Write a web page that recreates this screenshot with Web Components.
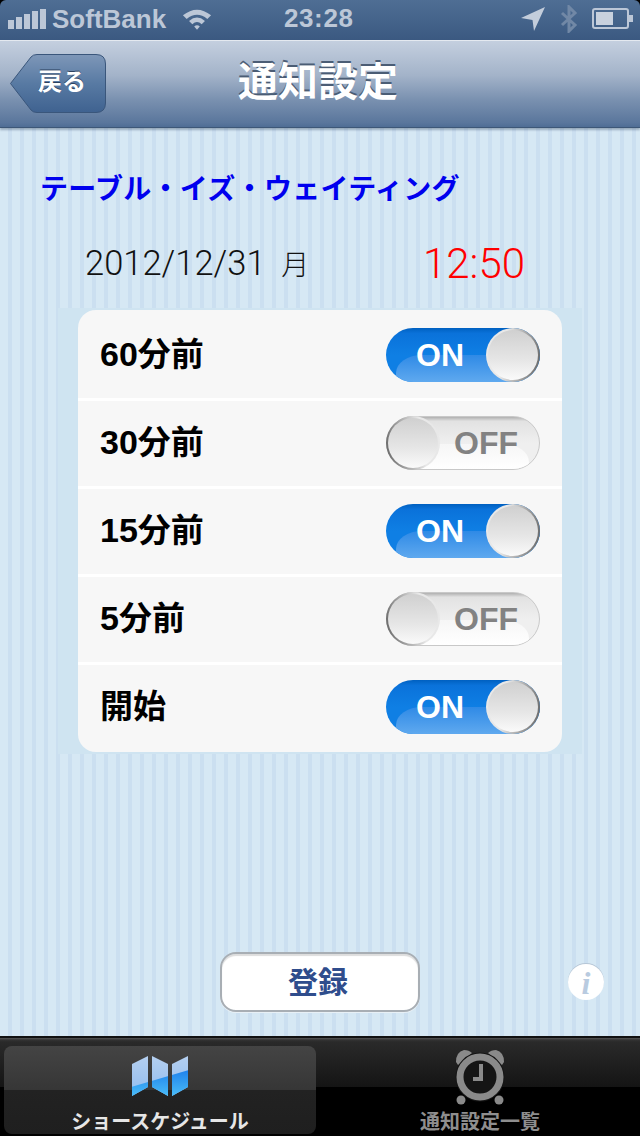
<!DOCTYPE html>
<html lang="ja">
<head>
<meta charset="utf-8">
<title>通知設定</title>
<style>
  html, body { margin: 0; padding: 0; background: #000; }
  body { font-family: "Liberation Sans", "Noto Sans CJK JP", sans-serif; }
</style>
</head>
<body>
<notify-app></notify-app>

<script>
const FONT = '"Liberation Sans", "Noto Sans CJK JP", sans-serif';

class StatusBar extends HTMLElement {
  constructor() {
    super();
    this.attachShadow({ mode: 'open' });
    this.shadowRoot.innerHTML = `
      <style>
        :host {
          display: flex; align-items: center; position: relative; box-sizing: border-box;
          height: 41px; padding: 0 0 2px 8px; flex: none;
          background: linear-gradient(#4f6e94, #3b5981);
          border-radius: 6px 6px 0 0;
          border-bottom: 1px solid #e4e9f0;
          color: #bcc7d7; font: bold 26px ${FONT};
        }
        svg { display: block; flex: none; }
        .carrier { margin-left: 6px; }
        .wifi { margin-left: 16px; }
        .time { position: absolute; left: 284px; top: 2px; line-height: 32px; letter-spacing: .6px; }
        .right { margin-left: auto; display: flex; align-items: center; }
      </style>
      <svg width="38" height="21" viewBox="0 0 38 21" fill="#bcc7d7">
        <rect x="0" y="11" width="6" height="9"/><rect x="8" y="8" width="6" height="12"/>
        <rect x="16" y="5" width="6" height="15"/><rect x="24" y="2" width="6" height="18"/>
        <rect x="32" y="0" width="6" height="20"/>
      </svg>
      <span class="carrier">SoftBank</span>
      <svg class="wifi" width="30" height="24" viewBox="0 0 32 24">
        <path d="M1 8 Q16 -4 31 8 L27 12 Q16 3 5 12 Z" fill="#bcc7d7"/>
        <path d="M7.500 14 Q16 7 24.500 14 L21 17.500 Q16 13 11 17.500 Z" fill="#bcc7d7"/>
        <path d="M13 20 Q16 17.500 19 20 L16 23.500 Z" fill="#bcc7d7"/>
      </svg>
      <span class="time">23:28</span>
      <div class="right">
        <svg width="24" height="24" viewBox="0 0 24 24"><path d="M0 11 L24 0 L13 24 L11.500 13 Z" fill="#c3cddb"/></svg>
        <svg style="margin-left:15px" width="18" height="28" viewBox="0 0 18 28" fill="none">
          <path d="M2 8 L15 20 L9 26 L9 2 L15 8 L2 20" stroke="#7188a6" stroke-width="3"/>
        </svg>
        <svg style="margin:0 6px 0 14px" width="42" height="22" viewBox="0 0 42 22">
          <rect x="1" y="1" width="35" height="19" rx="2" fill="none" stroke="#bcc7d7" stroke-width="2"/>
          <rect x="4" y="4" width="17" height="13" fill="#c8d1de"/>
          <path d="M37 7 H41 V14 H37 Z" fill="#bcc7d7"/>
        </svg>
      </div>
    `;
  }
}

class NavBar extends HTMLElement {
  constructor() {
    super();
    this.attachShadow({ mode: 'open' });
    this.shadowRoot.innerHTML = `
      <style>
        :host {
          display: flex; align-items: center; justify-content: center; position: relative;
          box-sizing: border-box; height: 87px; flex: none;
          background: linear-gradient(#c4cfdf, #a3b3c9 40%, #7a91b0 68%, #5a769c 95%, #4f6d95);
          border-bottom: 1px solid #3d5777;
          box-shadow: 0 2px 2px rgba(40, 60, 90, .35);
        }
        .title { color: #fff; font: bold 40px ${FONT}; margin: 0 4px 10px 0; text-shadow: 0 -2px 0 #4b5d75; }
        .back { position: absolute; left: 10px; top: 13px; width: 96px; height: 59px; }
        .back svg { position: absolute; inset: 0; }
        .back span {
          position: absolute; left: 28px; top: 13px; color: #fff;
          font: bold 24px/30px ${FONT}; text-shadow: 0 -1px 0 #2c415f;
        }
      </style>
      <div class="back">
        <svg width="96" height="59" viewBox="0 0 96 59">
          <defs><linearGradient id="bk" x1="0" y1="0" x2="0" y2="1">
            <stop offset="0" stop-color="#7e97b8"/><stop offset=".5" stop-color="#587aa3"/><stop offset="1" stop-color="#3f6290"/>
          </linearGradient></defs>
          <path d="M.5 29.500 L21 3 Q23 .5 27 .5 H86 Q95.500 .5 95.500 10 V49 Q95.500 58.500 86 58.500 H27 Q23 58.500 21 56 Z" fill="url(#bk)" stroke="#3a567b"/>
        </svg>
        <span>戻る</span>
      </div>
      <span class="title">通知設定</span>
    `;
  }
}

class ToggleSwitch extends HTMLElement {
  constructor() {
    super();
    this.attachShadow({ mode: 'open' });
    const on = this.hasAttribute('on');
    this.shadowRoot.innerHTML = `
      <style>
        :host { display: block; position: relative; width: 154px; height: 54px; flex: none; }
        .track {
          position: absolute; inset: 0; border-radius: 27px; overflow: hidden; box-sizing: border-box;
          display: flex; align-items: center; font: bold 32px ${FONT};
        }
        .track.on {
          background: linear-gradient(#0060c0, #0a72da 10%, #0f7fe4 50%);
          color: #fff; padding-left: 30px;
        }
        .track.off {
          background: linear-gradient(#b0b0b0, #e2e2e2 8%, #efefef 50%);
          border: 1px solid #c8c8c8; color: #828282; padding-left: 67px;
        }
        .gloss { position: absolute; top: 27px; bottom: 0; }
        .on .gloss {
          left: 10px; right: 0; border-top-left-radius: 26px 18px;
          background: linear-gradient(#2f8ae6, #5fa9ef);
        }
        .off .gloss {
          left: 0; right: 10px; border-top-right-radius: 26px 18px;
          background: linear-gradient(#f6f6f6, #fff);
        }
        .track span { position: relative; }
        .knob {
          position: absolute; top: 0; width: 54px; height: 54px; box-sizing: border-box; padding: 2px;
          border-radius: 50%;
          background: linear-gradient(${on ? '100deg, #e8e8e8 35%, #5f5f5f' : '260deg, #e8e8e8 35%, #5f5f5f'});
          ${on ? 'right: 0;' : 'left: 0;'}
        }
        .knob div {
          width: 100%; height: 100%; border-radius: 50%;
          background: linear-gradient(#d0d0d0, #e6e6e6 60%, #fafafa);
        }
      </style>
      <div class="track ${on ? 'on' : 'off'}"><div class="gloss"></div><span>${on ? 'ON' : 'OFF'}</span></div>
      <div class="knob"><div></div></div>
    `;
  }
}

class SettingRow extends HTMLElement {
  constructor() {
    super();
    this.attachShadow({ mode: 'open' });
    const num = this.getAttribute('num') || '';
    this.shadowRoot.innerHTML = `
      <style>
        :host {
          display: flex; align-items: center; justify-content: space-between; box-sizing: border-box;
          height: 88px; padding: 0 22px 1px; background: #f7f7f7; border-top: 3px solid #fff;
          font: bold 33px ${FONT}; color: #000;
        }
        :host(:first-child) { border-top: 0; padding-top: 2px; padding-bottom: 0; }
        :host(:last-child) { height: 90px; padding-bottom: 3px; }
        .text { padding-bottom: 6px; }
        .num { font-size: 34px; }
      </style>
      <span class="text"><span class="num">${num}</span><slot></slot></span>
      <slot name="control"></slot>
    `;
  }
}

class SettingGroup extends HTMLElement {
  constructor() {
    super();
    this.attachShadow({ mode: 'open' });
    this.shadowRoot.innerHTML = `
      <style>
        :host { display: block; margin: 0 58px; padding: 2px 20px; background: #cfe4f1; }
        .card { border-radius: 18px; overflow: hidden; }
      </style>
      <div class="card"><slot></slot></div>
    `;
  }
}

class TabItem extends HTMLElement {
  constructor() {
    super();
    this.attachShadow({ mode: 'open' });
    this.shadowRoot.innerHTML = `
      <style>
        :host {
          display: flex; flex-direction: column; align-items: center; box-sizing: border-box; position: relative;
          width: 312px; height: 88px; border-radius: 8px; font: bold 20px/24px ${FONT}; color: #8e8e8e;
        }
        :host([selected]) {
          color: #e6e6e6;
          background: linear-gradient(#444 0, #363636 50%, #222 50%, #1f1f1f);
        }
        .icon { height: 62px; display: flex; align-items: center; }
        .label { margin-top: 2px; white-space: nowrap; }
      </style>
      <div class="icon"><slot name="icon"></slot></div>
      <div class="label"><slot></slot></div>
    `;
  }
}

class TabBar extends HTMLElement {
  constructor() {
    super();
    this.attachShadow({ mode: 'open' });
    this.shadowRoot.innerHTML = `
      <style>
        :host {
          display: flex; justify-content: space-between; box-sizing: border-box; flex: none;
          height: 100px; padding: 8px 4px 4px;
          border-top: 2px solid #111;
          background: linear-gradient(#555 0, #333 2px, #2a2a2a 4px, #141414 50%, #000 50%, #000);
        }
      </style>
      <slot></slot>
    `;
  }
}

class NotifyApp extends HTMLElement {
  constructor() {
    super();
    this.attachShadow({ mode: 'open' });
    this.shadowRoot.innerHTML = `
      <style>
        :host {
          display: flex; flex-direction: column; width: 640px; height: 1136px; overflow: hidden;
          font-family: ${FONT}; background: #000;
        }
        main {
          flex: 1; display: flex; flex-direction: column; min-height: 0;
          background: repeating-linear-gradient(90deg, #d6e8f4 0, #d6e8f4 8px, #cbdff0 8px, #cbdff0 12px);
        }
        h1 { margin: 43px 0 0 40px; font: bold 28px/38px ${FONT}; letter-spacing: .3px; color: #0000ee; }
        .when {
          display: grid; grid-template-columns: 338px auto; align-items: center;
          margin: 26px 0 0 85px; height: 56px; color: #111;
          font: 300 34.500px Roboto, "Noto Sans CJK JP", sans-serif;
        }
        .day { font-size: 28px; margin-left: 9px; font-weight: 300; }
        .clock { color: #f00; font-size: 42px; }
        .foot { margin-top: auto; display: flex; align-items: center; position: relative; height: 60px; margin-bottom: 24px; justify-content: center; }
        .save {
          box-sizing: border-box; width: 200px; height: 60px; border-radius: 16px; background: #fff;
          border: 2px solid #a8aeb4; color: #2f4d8c; font: bold 30px/58px ${FONT}; text-align: center;
          padding-right: 4px; box-shadow: inset 0 2px 1px #ddd, 0 1px 0 #e8f0f6;
        }
        .info {
          position: absolute; left: 568px; top: 12px; width: 36px; height: 36px; border-radius: 50%;
          background: #fff; box-shadow: 0 -1px 0 #b6c6d6; color: #b9cbe0; text-align: center;
          font: italic bold 32px/38px "Liberation Serif", serif;
        }
        svg { display: block; }
      </style>
      <status-bar></status-bar>
      <nav-bar></nav-bar>
      <main>
        <h1>テーブル・イズ・ウェイティング</h1>
        <div class="when"><span>2012/12/31<span class="day"> 月</span></span><span class="clock">12:50</span></div>
        <setting-group style="margin-top:17px">
          <setting-row num="60">分前<toggle-switch slot="control" on></toggle-switch></setting-row>
          <setting-row num="30">分前<toggle-switch slot="control"></toggle-switch></setting-row>
          <setting-row num="15">分前<toggle-switch slot="control" on></toggle-switch></setting-row>
          <setting-row num="5">分前<toggle-switch slot="control"></toggle-switch></setting-row>
          <setting-row>開始<toggle-switch slot="control" on></toggle-switch></setting-row>
        </setting-group>
        <div class="foot">
          <div class="save">登録</div>
          <div class="info">i</div>
        </div>
      </main>
      <tab-bar>
        <tab-item selected>
          <svg slot="icon" width="58" height="42" viewBox="0 0 58 42">
            <defs>
              <linearGradient id="mpTop" x1="0" y1="0" x2="0" y2="1">
                <stop offset="0" stop-color="#b4cff0"/><stop offset="1" stop-color="#8fbcf0"/>
              </linearGradient>
              <linearGradient id="mpLow" x1="0" y1="0" x2="0" y2="1">
                <stop offset="0" stop-color="#1f82ec"/><stop offset="1" stop-color="#4cc0f8"/>
              </linearGradient>
              <clipPath id="mpClip">
                <path d="M1 8 L17 0 V31 L1 40 Z M21 0 L37 8 V40 L21 31 Z M41 8 L57 0 V31 L41 40 Z"/>
              </clipPath>
            </defs>
            <g clip-path="url(#mpClip)">
              <rect width="58" height="42" fill="url(#mpTop)"/>
              <path d="M0 31 L58 14 V42 H0 Z" fill="url(#mpLow)"/>
            </g>
          </svg>
          ショースケジュール
        </tab-item>
        <tab-item>
          <svg slot="icon" width="50" height="56" viewBox="0 0 50 56">
            <path d="M1 13 Q1 3 9 1 Q14 1 17 4 L3 16 Z M49 13 Q49 3 41 1 Q36 1 33 4 L47 16 Z" fill="#8a8a8a"/>
            <circle cx="25" cy="28" r="24.500" fill="#151515"/>
            <circle cx="25" cy="28" r="20" fill="#151515" stroke="#8a8a8a" stroke-width="7"/>
            <circle cx="6" cy="51" r="4.500" fill="#8a8a8a"/>
            <circle cx="44" cy="51" r="4.500" fill="#8a8a8a"/>
            <path d="M26 15 V30 H18" fill="none" stroke="#8a8a8a" stroke-width="4"/>
          </svg>
          通知設定一覧
        </tab-item>
      </tab-bar>
    `;
  }
}

customElements.define('status-bar', StatusBar);
customElements.define('nav-bar', NavBar);
customElements.define('toggle-switch', ToggleSwitch);
customElements.define('setting-row', SettingRow);
customElements.define('setting-group', SettingGroup);
customElements.define('tab-item', TabItem);
customElements.define('tab-bar', TabBar);
customElements.define('notify-app', NotifyApp);
</script>
</body>
</html>
